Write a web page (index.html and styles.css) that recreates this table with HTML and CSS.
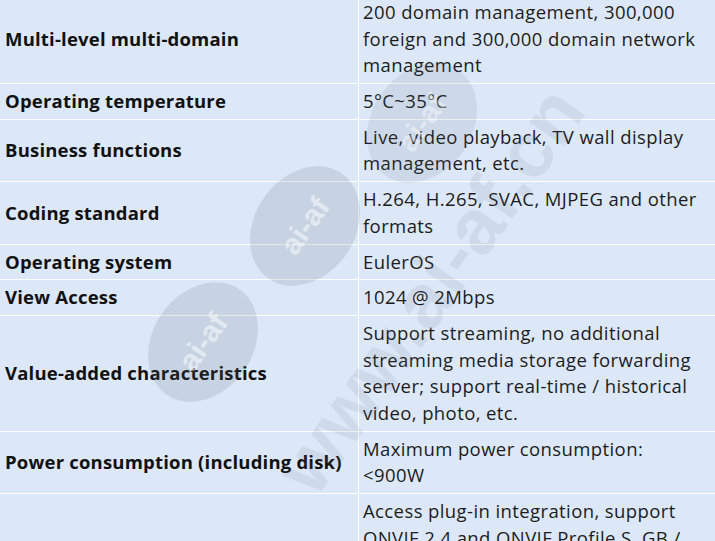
FILE: index.html
```html
<!DOCTYPE html>
<html lang="en">
<head>
<meta charset="utf-8">
<title>Specifications</title>
<link rel="stylesheet" href="styles.css">
</head>
<body>
<div class="page">
  <table class="spec">
    <colgroup><col class="c-label"><col class="c-value"></colgroup>
    <tr><th>Multi-level multi-domain</th><td>200 domain management, 300,000 foreign and 300,000 domain network management</td></tr>
    <tr><th>Operating temperature</th><td>5°C~35°C</td></tr>
    <tr><th>Business functions</th><td>Live, video playback, TV wall display management, etc.</td></tr>
    <tr><th>Coding standard</th><td>H.264, H.265, SVAC, MJPEG and other formats</td></tr>
    <tr><th>Operating system</th><td>EulerOS</td></tr>
    <tr><th>View Access</th><td>1024 @ 2Mbps</td></tr>
    <tr><th>Value-added characteristics</th><td>Support streaming, no additional streaming media storage forwarding server; support real-time / historical video, photo, etc.</td></tr>
    <tr><th>Power consumption (including disk)</th><td>Maximum power consumption: &lt;900W</td></tr>
    <tr><th>Third-party access</th><td>Access plug-in integration, support ONVIF 2.4 and ONVIF Profile S, GB / T28181-2016, GA / T1400 protocol access, third-party SDK access, third-party platform cascading access, etc.</td></tr>
  </table>
  <div class="wm" aria-hidden="true">
    <div class="logo logo-a">ai-af</div>
    <div class="logo logo-b">ai-af</div>
    <div class="logo logo-c">ai-af</div>
    <div class="url">www.ai-af.cn</div>
  </div>
</div>
</body>
</html>
```
FILE: styles.css
```css
html, body {
  margin: 0;
  padding: 0;
}
body {
  background: #dce8f7;
  overflow: hidden;
}
.page {
  position: relative;
  width: 715px;
  height: 541px;
  overflow: hidden;
}
.spec {
  border-collapse: collapse;
  table-layout: fixed;
  width: 760px;
  margin-top: -6px;
  margin-left: -1px;
  font-family: "Open Sans", "Noto Sans", sans-serif;
  font-size: 18.5px;
  letter-spacing: 0.4px;
  color: #1c1c1c;
  background: #dce8f7;
}
.c-label { width: 359px; }
.spec th,
.spec td {
  border: 1px solid #ffffff;
  padding: 4.1px 5px;
  line-height: 26.6px;
  vertical-align: middle;
  text-align: left;
}
.spec th {
  font-weight: 700;
  letter-spacing: 0.2px;
  color: #111;
}
.spec td {
  padding-left: 4px;
  padding-right: 60px;
}
.wm {
  position: absolute;
  inset: 0;
  pointer-events: none;
  overflow: hidden;
}
.logo {
  position: absolute;
  width: 128px;
  height: 100px;
  border-radius: 50%;
  background: rgba(95, 105, 120, 0.16);
  transform: translate(-50%, -50%) rotate(-55deg);
  display: flex;
  align-items: center;
  justify-content: center;
  color: rgba(255, 255, 255, 0.5);
  font-family: "Liberation Sans", sans-serif;
  font-weight: 700;
  font-size: 30px;
}
.logo-a { left: 422px; top: 123px; opacity: 0.7; }
.logo-b { left: 305px; top: 226px; }
.logo-c { left: 203px; top: 342px; }
.url {
  position: absolute;
  left: 430px;
  top: 290px;
  transform: translate(-50%, -50%) rotate(-55deg);
  font-family: "Liberation Sans", sans-serif;
  font-weight: 700;
  font-size: 78px;
  color: rgba(100, 110, 125, 0.11);
  white-space: nowrap;
}
```
